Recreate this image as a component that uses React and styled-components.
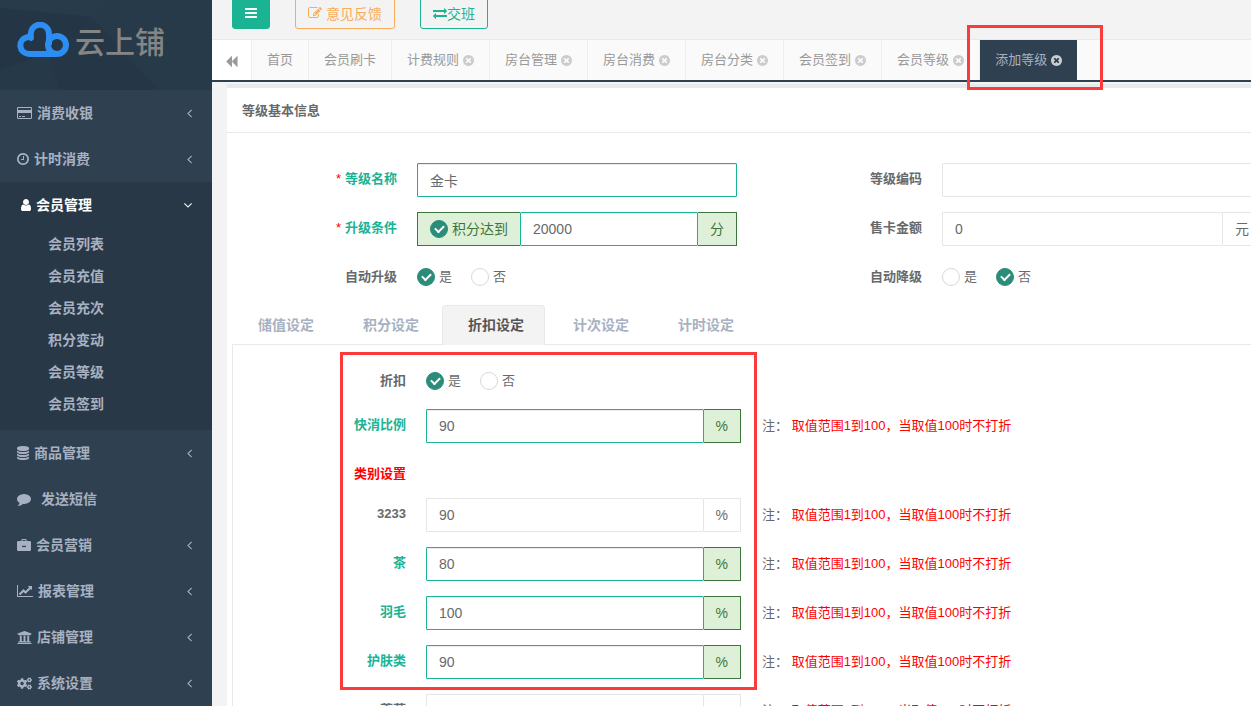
import React from "react"
import styled, { createGlobalStyle, css } from "styled-components"
import { FaUniversity, FaCogs } from "react-icons/fa"

const GREEN = "#1ab394"
const NAVY = "#2f4050"
const BORDER = "#e7eaec"
const CELL_BORDER = "#e5e6e7"
const MARK = "#fb3b3b"

const paths = {
    clock: "M1024 544v448q0 14-9 23t-23 9h-320q-14 0-23-9t-9-23v-64q0-14 9-23t23-9h224v-352q0-14 9-23t23-9h64q14 0 23 9t9 23zm416 352q0-148-73-273t-198-198-273-73-273 73-198 198-73 273 73 273 198 198 273 73 273-73 198-198 73-273zm224 0q0 209-103 385.5t-279.5 279.5-385.5 103-385.5-103-279.5-279.5-103-385.5 103-385.5 279.5-279.5 385.5-103 385.5 103 279.5 279.5 103 385.5z",
    user: "M1536 1399q0 109-62.5 187t-150.5 78h-854q-88 0-150.5-78t-62.5-187q0-85 8.5-160.5t31.5-152 58.5-131 94-89 134.5-34.5q131 128 313 128t313-128q76 0 134.5 34.5t94 89 58.5 131 31.5 152 8.5 160.5zm-256-887q0 159-112.5 271.5t-271.5 112.5-271.5-112.5-112.5-271.5 112.5-271.5 271.5-112.5 271.5 112.5 112.5 271.5z",
    database: "M896 768q237 0 443-43t325-127v170q0 69-103 128t-280 93.5-385 34.5-385-34.5-280-93.5-103-128v-170q119 84 325 127t443 43zm0 768q237 0 443-43t325-127v170q0 69-103 128t-280 93.5-385 34.5-385-34.5-280-93.5-103-128v-170q119 84 325 127t443 43zm0-384q237 0 443-43t325-127v170q0 69-103 128t-280 93.5-385 34.5-385-34.5-280-93.5-103-128v-170q119 84 325 127t443 43zm0-1152q208 0 385 34.5t280 93.5 103 128v128q0 69-103 128t-280 93.5-385 34.5-385-34.5-280-93.5-103-128v-128q0-69 103-128t280-93.5 385-34.5z",
    comment: "M1792 896q0 174-120 321.5t-326 233-450 85.5q-70 0-145-8-198 175-460 242-49 14-114 22-17 2-30.5-9t-17.5-29v-1q-3-4-.5-12t2-10 4.5-9.5l6-9 7-8.5 8-9q7-8 31-34.5t34.5-38 31-39.5 32.5-51 27-59 26-76q-157-89-247.5-220t-90.5-281q0-130 71-248.5t191-204.5 286-136.5 348-50.5q244 0 450 85.5t326 233 120 321.5z",
    briefcase: "M560 384v-150q0-106 106-106h460q106 0 106 106v150h400q160 0 160 160v960q0 160-160 160h-1472q-160 0-160-160v-960q0-160 160-160zm144 0h384v-128h-384zm-64 580v150q256 120 512 0v-150q-256 90-512 0z",
    chart: "M2048 1536v128h-2048v-1536h128v1408h1920zm-128-1248v435q0 21-19.5 29.5t-35.5-7.5l-121-121-633 633q-10 10-23 10t-23-10l-233-233-416 416-192-192 585-585q10-10 23-10t23 10l233 233 464-464-121-121q-16-16-7.5-35.5t29.5-19.5h435q14 0 23 9t9 23z",
    card: "M160 128h1600q160 0 160 160v1216q0 160-160 160h-1600q-160 0-160-160v-1216q0-160 160-160zm32 128q-64 0-64 64v192h1664v-192q0-64-64-64zm-64 640v576q0 64 64 64h1536q64 0 64-64v-576zm128 384h256v128h-256zm384 0h384v128h-384z",
    left: "M1203 544q0 13-10 23l-393 393 393 393q10 10 10 23t-10 23l-50 50q-10 10-23 10t-23-10l-466-466q-10-10-10-23t10-23l466-466q10-10 23-10t23 10l50 50q10 10 10 23z",
    down: "M1395 736q0 13-10 23l-466 466q-10 10-23 10t-23-10l-466-466q-10-10-10-23t10-23l50-50q10-10 23-10t23 10l393 393 393-393q10-10 23-10t23 10l50 50q10 10 10 23z",
    bars: "M1664 1344v128q0 26-19 45t-45 19h-1408q-26 0-45-19t-19-45v-128q0-26 19-45t45-19h1408q26 0 45 19t19 45zm0-512v128q0 26-19 45t-45 19h-1408q-26 0-45-19t-19-45v-128q0-26 19-45t45-19h1408q26 0 45 19t19 45zm0-512v128q0 26-19 45t-45 19h-1408q-26 0-45-19t-19-45v-128q0-26 19-45t45-19h1408q26 0 45 19t19 45z",
    edit: "M888 1184l116-116-152-152-116 116v56h96v96h56zm440-720q-16-16-33 1l-350 350q-17 17-1 33t33-1l350-350q17-17 1-33zm80 594v190q0 119-84.5 203.5t-203.5 84.5h-832q-119 0-203.5-84.5t-84.5-203.5v-832q0-119 84.5-203.5t203.5-84.5h832q63 0 117 25 15 7 18 23 3 17-9 29l-49 49q-14 14-32 8-23-6-45-6h-832q-66 0-113 47t-47 113v832q0 66 47 113t113 47h832q66 0 113-47t47-113v-126q0-13 9-22l64-64q15-15 35-7t20 29zm-96-738l288 288-672 672h-288v-288zm444 132l-92 92-288-288 92-92q28-28 68-28t68 28l152 152q28 28 28 68t-28 68z",
    exchange: "M1792 1184v192q0 13-9.5 22.5t-22.5 9.5h-1376v192q0 13-9.5 22.5t-22.5 9.5q-12 0-24-10l-319-320q-9-9-9-22 0-14 9-23l320-320q9-9 23-9 13 0 22.5 9.5t9.5 22.5v192h1376q13 0 22.5 9.5t9.5 22.5zm0-544q0 14-9 23l-320 320q-9 9-23 9-13 0-22.5-9.5t-9.5-22.5v-192h-1376q-13 0-22.5-9.5t-9.5-22.5v-192q0-13 9.5-22.5t22.5-9.5h1376v-192q0-14 9-23t23-9q12 0 24 10l319 319q9 9 9 23z",
    backward: "M1683 141q19-19 32-13t13 32v1472q0 26-13 32t-32-13l-710-710q-9-9-13-19v710q0 26-13 32t-32-13l-710-710q-19-19-19-45t19-45l710-710q19-19 32-13t13 32v710q4-10 13-19z",
    close: "M1277 1122q0-26-19-45l-181-181 181-181q19-19 19-45 0-27-19-46l-90-90q-19-19-46-19-26 0-45 19l-181 181-181-181q-19-19-45-19-27 0-46 19l-90 90q-19 19-19 46 0 26 19 45l181 181-181 181q-19 19-19 45 0 27 19 46l90 90q19 19 46 19 26 0 45-19l181-181 181 181q19 19 45 19 27 0 46-19l90-90q19-19 19-46zm387-226q0 209-103 385.5t-279.5 279.5-385.5 103-385.5-103-279.5-279.5-103-385.5 103-385.5 279.5-279.5 385.5-103 385.5 103 279.5 279.5 103 385.5z",
}

// x, width: the part of the 1792 grid that the glyph fills
const Icon = ({ name, x = 0, width = 1792, size = 14 }) => (
    <svg
        viewBox={`${x} 0 ${width} 1792`}
        width={Math.round((size * width) / 1792)}
        height={size}
        fill="currentColor"
        fillRule="evenodd"
        aria-hidden="true"
    >
        <path d={paths[name]} />
    </svg>
)

const menu = [
    { text: "消费收银", icon: <Icon name="card" width={1920} />, arrow: true },
    { text: "计时消费", icon: <Icon name="clock" x={128} width={1536} />, arrow: true },
    {
        text: "会员管理",
        icon: <Icon name="user" x={256} width={1280} />,
        arrow: true,
        children: ["会员列表", "会员充值", "会员充次", "积分变动", "会员等级", "会员签到"],
    },
    { text: "商品管理", icon: <Icon name="database" x={128} width={1536} />, arrow: true },
    { text: "发送短信", icon: <Icon name="comment" />, wide: true },
    { text: "会员营销", icon: <Icon name="briefcase" />, arrow: true },
    { text: "报表管理", icon: <Icon name="chart" width={2048} />, arrow: true },
    { text: "店铺管理", icon: <FaUniversity size={15} />, arrow: true },
    { text: "系统设置", icon: <FaCogs size={15} />, arrow: true },
]

const pageTabs = [
    { text: "首页", fixed: true },
    { text: "会员刷卡", fixed: true },
    { text: "计费规则" },
    { text: "房台管理" },
    { text: "房台消费" },
    { text: "房台分类" },
    { text: "会员签到" },
    { text: "会员等级" },
    { text: "添加等级", active: true },
]

const settingTabs = ["储值设定", "积分设定", "折扣设定", "计次设定", "计时设定"]

const categories = [
    { id: "c3233", text: "3233", value: "90" },
    { id: "tea", text: "茶", value: "80", valid: true },
    { id: "feather", text: "羽毛", value: "100", valid: true },
    { id: "skin", text: "护肤类", value: "90", valid: true },
    { id: "flower", text: "蔷薇", value: "" },
]

const Logo = () => (
    <LogoArea href="#">
        <LogoBackdrop viewBox="0 0 212 90" preserveAspectRatio="none" aria-hidden="true">
            <rect width="212" height="90" fill="#263949" />
            <path d="M0 0H110L92 17 0 8z" fill="#283b4b" />
            <path d="M0 8L92 17 60 48 0 70z" fill="#243646" />
            <path d="M92 17L158 90H60L50 60z" fill="#253747" />
            <path d="M110 0H212V90H158L92 17z" fill="#273a4a" />
        </LogoBackdrop>
        <svg viewBox="0 0 52 36" width="52" height="36" fill="none" aria-hidden="true">
            <defs>
                <linearGradient id="fold" x1="0" x2="1">
                    <stop offset="0" stopColor="#2c8df2" />
                    <stop offset="0.6" stopColor="#1c6fe0" />
                    <stop offset="1" stopColor="#2c8df2" />
                </linearGradient>
            </defs>
            <circle cx="40" cy="23" r="9" stroke="#2c8df2" strokeWidth="6" />
            <path
                d="M40 32H13C1 32 0 17 11 15C12 15 13 15 14 16C11 -1 32 -1 32 12V23"
                stroke="#2c8df2"
                strokeWidth="6"
                strokeLinejoin="round"
            />
            <path d="M24 32H42" stroke="url(#fold)" strokeWidth="6" />
        </svg>
        <LogoText>云上铺</LogoText>
    </LogoArea>
)

const Note = () => (
    <NoteText>
        注： <em>取值范围1到100，当取值100时不打折</em>
    </NoteText>
)

const YesNo = ({ name, value }) => (
    <Choices>
        <Choice>
            <Tick type="radio" name={name} defaultChecked={value === "yes"} />是
        </Choice>
        <Choice>
            <Tick type="radio" name={name} defaultChecked={value === "no"} />否
        </Choice>
    </Choices>
)

const Percent = ({ id, text, value, valid }) => (
    <DiscountRow>
        <Label htmlFor={id} $valid={valid}>{text}</Label>
        <Group>
            <Input id={id} defaultValue={value} $valid={valid} />
            <Addon $valid={valid}>%</Addon>
        </Group>
        <Note />
    </DiscountRow>
)

class App extends React.Component {
    render() {
        return (
            <Page>
                <GlobalStyle />
                <Sidebar>
                    <Logo />
                    {menu.map(item => (
                        <MenuGroup key={item.text} $open={!!item.children}>
                            <MenuLink href="#" $open={!!item.children} $wide={item.wide}>
                                {item.icon}
                                <span>{item.text}</span>
                                {item.arrow && (
                                    <Arrow>
                                        <Icon
                                            name={item.children ? "down" : "left"}
                                            x={item.children ? 384 : 576}
                                            width={item.children ? 1024 : 640}
                                        />
                                    </Arrow>
                                )}
                            </MenuLink>
                            {item.children && item.children.map(child => (
                                <SubLink href="#" key={child}>{child}</SubLink>
                            ))}
                        </MenuGroup>
                    ))}
                </Sidebar>

                <Main>
                    <TopBar>
                        <TopButton $kind="primary" aria-label="菜单">
                            <Icon name="bars" x={128} width={1536} />
                        </TopButton>
                        <TopButton $kind="warning">
                            <Icon name="edit" />
                            <span>意见反馈</span>
                        </TopButton>
                        <TopButton $kind="outline">
                            <Icon name="exchange" />交班
                        </TopButton>
                    </TopBar>

                    <TabBar>
                        <Rollback aria-label="向左">
                            <Icon name="backward" size={13} />
                        </Rollback>
                        {pageTabs.map(tab => (
                            <PageTab href="#" key={tab.text} $active={tab.active}>
                                {tab.text}
                                {!tab.fixed && <Icon name="close" x={128} width={1536} size={13} />}
                                {tab.active && <TabMark />}
                            </PageTab>
                        ))}
                    </TabBar>

                    <Panel>
                        <PanelTitle>等级基本信息</PanelTitle>
                        <PanelBody>
                            <FormGrid>
                                <FormRow>
                                    <Label htmlFor="name" $valid><Star>*</Star>等级名称</Label>
                                    <Input id="name" defaultValue="金卡" $valid />
                                </FormRow>
                                <FormRow>
                                    <Label htmlFor="code">等级编码</Label>
                                    <Input id="code" />
                                </FormRow>
                                <FormRow>
                                    <Label htmlFor="points" $valid><Star>*</Star>升级条件</Label>
                                    <Group>
                                        <Addon as="label" $valid $first>
                                            <Tick type="checkbox" defaultChecked />积分达到
                                        </Addon>
                                        <Input id="points" defaultValue="20000" $valid />
                                        <Addon $valid>分</Addon>
                                    </Group>
                                </FormRow>
                                <FormRow>
                                    <Label htmlFor="price">售卡金额</Label>
                                    <Group>
                                        <Input id="price" defaultValue="0" />
                                        <Addon>元</Addon>
                                    </Group>
                                </FormRow>
                                <FormRow>
                                    <Label as="span">自动升级</Label>
                                    <YesNo name="upgrade" value="yes" />
                                </FormRow>
                                <FormRow>
                                    <Label as="span">自动降级</Label>
                                    <YesNo name="downgrade" value="no" />
                                </FormRow>
                            </FormGrid>

                            <SettingTabs>
                                {settingTabs.map(text => (
                                    <SettingTab key={text} $active={text === "折扣设定"}>{text}</SettingTab>
                                ))}
                            </SettingTabs>
                            <SettingPane>
                                <DiscountRow $height={29}>
                                    <Label as="span">折扣</Label>
                                    <YesNo name="discount" value="yes" />
                                </DiscountRow>
                                <Percent id="fast" text="快消比例" value="90" valid />
                                <DiscountRow $height={25}>
                                    <Label as="span" $alert>类别设置</Label>
                                </DiscountRow>
                                {categories.map(item => <Percent key={item.id} {...item} />)}
                                <PaneMark />
                            </SettingPane>
                        </PanelBody>
                    </Panel>
                </Main>
            </Page>
        )
    }
}

const GlobalStyle = createGlobalStyle`
    *, *::after {
        box-sizing: border-box;
    }
    body {
        margin: 0;
        font-family: "Liberation Sans", "Noto Sans CJK SC", sans-serif;
        font-size: 13px;
        line-height: 20px;
        color: #676a6c;
    }
    a {
        color: inherit;
        text-decoration: none;
    }
    button, input {
        font-family: inherit;
    }
    svg {
        flex: none;
    }
`

const Page = styled.div`
    display: flex;
    height: 100vh;
    overflow: hidden;
    background: #f3f3f4;
`

const Sidebar = styled.nav`
    flex: none;
    width: 212px;
    background: ${NAVY};
    color: #a7b1c2;
    font-size: 14px;
    font-weight: 600;
`

const LogoArea = styled.a`
    position: relative;
    display: flex;
    align-items: center;
    gap: 6px;
    height: 90px;
    padding: 0 17px 10px;
`

const LogoBackdrop = styled.svg`
    position: absolute;
    inset: 0;
    width: 100%;
    height: 100%;

    & ~ * {
        position: relative;
    }
`

const LogoText = styled.span`
    padding-top: 6px;
    color: #858585;
    font-size: 30px;
    font-weight: 500;
    line-height: 36px;
`

const MenuGroup = styled.div`
    ${props => props.$open && css`
        padding-bottom: 10px;
        background: #293846;
    `}
`

const MenuLink = styled.a`
    display: flex;
    align-items: center;
    gap: ${props => (props.$wide ? 10 : 5)}px;
    height: 46px;
    padding: 0 20px 0 ${props => (props.$open ? 21 : 17)}px;
    color: ${props => (props.$open ? "#fff" : "inherit")};
`

const Arrow = styled.span`
    display: flex;
    margin-left: auto;
`

const SubLink = styled.a`
    display: block;
    padding: 6px 20px 6px 48px;
`

const Main = styled.main`
    flex: 1;
    min-width: 0;
    overflow: hidden;
`

const TopBar = styled.header`
    display: flex;
    align-items: flex-end;
    gap: 25px;
    height: 39px;
    padding: 0 20px 10px;
`

const TopButton = styled.button`
    display: flex;
    align-items: center;
    height: 32px;
    padding: 0 12px;
    border: 1px solid ${GREEN};
    border-radius: 3px;
    background: transparent;
    color: ${GREEN};
    font-size: 14px;

    span {
        margin-left: 4px;
    }

    ${props => props.$kind === "primary" && css`
        background: ${GREEN};
        color: #fff;
    `}
    ${props => props.$kind === "warning" && css`
        border-color: #f8ac59;
        color: #f8ac59;
    `}
`

const TabBar = styled.nav`
    display: flex;
    height: 43px;
    border-top: 1px solid ${BORDER};
    border-bottom: 2px solid ${NAVY};
    background: #fafafa;
    color: #999;
`

const Rollback = styled.button`
    display: flex;
    align-items: center;
    justify-content: center;
    width: 40px;
    padding: 3px 0 0;
    border: 0;
    border-right: 1px solid #eee;
    background: #fff;
    color: #999;
`

const PageTab = styled.a`
    position: relative;
    flex: none;
    display: flex;
    align-items: center;
    gap: 4px;
    padding: 0 15px;
    border-right: 1px solid #eee;

    svg {
        color: #ccc;
    }

    ${props => props.$active && css`
        border-right: 0;
        background: ${NAVY};
        color: #a7b1c2;
    `}
`

const TabMark = styled.i`
    position: absolute;
    inset: -15px -26px -10px -13px;
    border: 3px solid ${MARK};
`

const Panel = styled.section`
    margin: 2px 0 0 15px;
    border-top: 4px solid ${BORDER};
    background: #fff;
`

const PanelTitle = styled.h5`
    margin: 0;
    padding: 13px 15px 11px;
    border-bottom: 1px solid ${BORDER};
    font-size: 13px;
    font-weight: 600;
`

const PanelBody = styled.form`
    padding-top: 30px;
`

const FormGrid = styled.div`
    display: grid;
    grid-template-columns: repeat(2, minmax(525px, 1fr));
    row-gap: 15px;
`

const FormRow = styled.div`
    display: flex;
    gap: 20px;
    height: 34px;
    padding-right: 15px;

    & > :first-child {
        width: 170px;
    }
`

const Label = styled.label`
    flex: none;
    padding-top: 6px;
    text-align: right;
    font-weight: 600;
    color: ${props => (props.$alert ? "#f00" : props.$valid ? GREEN : "inherit")};
`

const Star = styled.span`
    margin-right: 4px;
    color: #f00;
    font-weight: 400;
`

const Input = styled.input`
    flex: 1;
    min-width: 0;
    height: 34px;
    padding: 6px 12px;
    border: 1px solid ${props => (props.$valid ? GREEN : CELL_BORDER)};
    border-radius: 1px;
    background: #fff;
    box-shadow: ${props => (props.$valid ? "inset 0 1px 1px rgba(0, 0, 0, 0.08)" : "none")};
    color: #676a6c;
    font-size: 14px;
    outline: 0;
`

const Group = styled.div`
    flex: 1;
    display: flex;
    min-width: 0;
`

const Addon = styled.span`
    flex: none;
    display: flex;
    align-items: center;
    padding: 0 12px;
    border: 1px solid ${props => (props.$valid ? "#3c763d" : CELL_BORDER)};
    border-left-width: ${props => (props.$first ? 1 : 0)}px;
    border-right-width: ${props => (props.$first ? 0 : 1)}px;
    background: ${props => (props.$valid ? "#dff0d8" : "#fff")};
    color: ${props => (props.$valid ? "#3c763d" : "inherit")};
    font-size: 14px;
`

const Choices = styled.div`
    display: flex;
    gap: 19px;
    align-items: center;
    height: 32px;
`

const Choice = styled.label`
    display: flex;
    align-items: center;
`

const Tick = styled.input`
    appearance: none;
    display: grid;
    place-items: center;
    width: 18px;
    height: 18px;
    margin: 0 4px 0 0;
    border: 1px solid #d9d9d5;
    border-radius: 50%;
    background: #fff;

    &:checked {
        border-color: #2b8d79;
        background: #2b8d79;
    }

    &:checked::after {
        content: "";
        width: 9px;
        height: 6px;
        margin-bottom: 2px;
        border: solid #fff;
        border-width: 0 0 2px 2px;
        transform: rotate(-45deg);
    }
`

const SettingTabs = styled.div`
    display: flex;
    gap: 2px;
    margin: 10px 0 -1px 5px;
`

const SettingTab = styled.button.attrs({ type: "button" })`
    position: relative;
    height: 40px;
    padding: 0 20px 4px 25px;
    border: 1px solid transparent;
    border-bottom: 0;
    border-radius: 4px 4px 0 0;
    background: transparent;
    color: #a7b1c2;
    font-size: 14px;
    font-weight: 600;

    ${props => props.$active && css`
        z-index: 1;
        border-color: ${BORDER};
        background: #f3f3f4;
        color: #555;
    `}
`

const SettingPane = styled.div`
    position: relative;
    display: flex;
    flex-direction: column;
    gap: 15px;
    margin-left: 5px;
    padding: 20px 0;
    border: solid ${BORDER};
    border-width: 1px 0 0 1px;
`

const DiscountRow = styled.div`
    display: grid;
    grid-template-columns: 173px 315px 1fr;
    column-gap: 20px;
    height: ${props => props.$height || 34}px;
`

const NoteText = styled.span`
    align-self: center;
    padding-left: 1px;
    white-space: pre;

    em {
        color: #f00;
        font-style: normal;
    }
`

const PaneMark = styled.i`
    position: absolute;
    top: 7px;
    left: 107px;
    width: 417px;
    height: 338px;
    border: 3px solid ${MARK};
    pointer-events: none;
`

export default App
